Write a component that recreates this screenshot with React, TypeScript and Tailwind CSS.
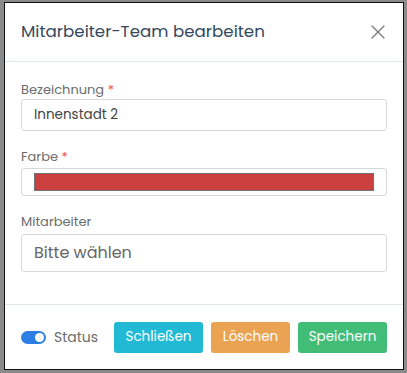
import { X } from "lucide-react";

export default function App() {
  return (
    <div className="w-[407px] h-[373px] bg-[#8a8a8a] pt-[2px] pl-[4px] font-['Poppins','Inter',sans-serif]">
      <div className="w-[400px] h-[368px] bg-white border border-[#111] flex flex-col">
        {/* Header */}
        <div className="h-[59px] px-4 flex items-center justify-between border-b border-[#dfe7ef]">
          <h2 className="text-[16.7px] text-[#34495e]">Mitarbeiter-Team bearbeiten</h2>
          <X size={24} strokeWidth={1.3} className="text-[#777] mr-[-3px]" />
        </div>

        {/* Body */}
        <div className="flex-1 px-4 pt-[18px] border-b border-[#dfe7ef]">
          <div>
            <label className="block text-[13px] leading-[19px] text-[#6c6c6c]">
              Bezeichnung <span className="text-[#e0565b]">*</span>
            </label>
            <div className="h-[32px] border border-[#d5d9de] rounded-[3px] px-3 flex items-center text-[13.5px] text-[#444]">
              Innenstadt 2
            </div>
          </div>

          <div className="mt-[16px]">
            <label className="block text-[13px] leading-[19px] text-[#6c6c6c] mb-[2px]">
              Farbe <span className="text-[#e0565b]">*</span>
            </label>
            <div className="h-[28px] border border-[#d5d9de] rounded-[3px] px-3 flex items-center">
              <div className="h-[18px] w-full bg-[#cb3f3f] border border-[#707070]" />
            </div>
          </div>

          <div className="mt-[16px]">
            <label className="block text-[13px] leading-[19px] text-[#6c6c6c] mb-[3px]">Mitarbeiter</label>
            <div className="h-[38px] border border-[#d5d9de] rounded-[3px] px-3 flex items-center text-[16px] text-[#666]">
              Bitte wählen
            </div>
          </div>
        </div>

        {/* Footer */}
        <div className="h-[64px] px-4 flex items-center">
          <div className="flex items-center gap-2">
            <div className="w-[25px] h-[13px] rounded-full bg-[#2d7fe6] flex items-center justify-end pr-[2px]">
              <div className="w-[9px] h-[9px] rounded-full bg-white" />
            </div>
            <span className="text-[14px] text-[#6c6c6c]">Status</span>
          </div>
          <div className="ml-auto flex gap-2">
            <button className="w-[89px] h-[31px] rounded-[3px] bg-[#22b9d4] text-white text-[13.5px]">Schließen</button>
            <button className="w-[79px] h-[31px] rounded-[3px] bg-[#e9a352] text-white text-[13.5px]">Löschen</button>
            <button className="w-[89px] h-[31px] rounded-[3px] bg-[#42bd78] text-white text-[13.5px]">Speichern</button>
          </div>
        </div>
      </div>
    </div>
  );
}
